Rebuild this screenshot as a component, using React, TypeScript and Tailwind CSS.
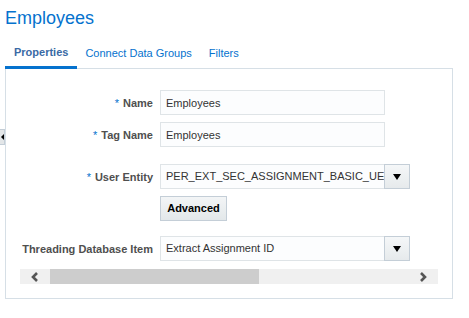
export default function App() {
  const font = { fontFamily: '"Liberation Sans", Arial, sans-serif' }

  return (
    <div className="relative w-[469px] h-[318px] bg-white overflow-hidden" style={font}>
      {/* collapse handle on the left edge */}
      <div className="absolute left-0 top-[129px] w-[5px] h-[16px] bg-[#e3e6e8] border border-l-0 border-[#c4ced7] flex items-center justify-center">
        <div className="w-0 h-0 border-y-[3px] border-y-transparent border-r-[3px] border-r-black" />
      </div>

      <div className="pl-[5px] w-[453px]">
        <h1 className="mt-[8px] text-[18px] leading-[21px] text-[#0572ce]">Employees</h1>

        {/* tabs */}
        <div className="mt-[16px] flex items-end border-b border-[#d6dfe6] text-[11px] leading-[14px]">
          <div className="px-[9px] pb-[7px] -mb-px border-b-[3px] border-[#0572ce] font-bold text-[#3a6aa5]">Properties</div>
          <div className="px-[8px] pb-[8px] text-[#0572ce]">Connect Data Groups</div>
          <div className="px-[9px] pb-[8px] text-[#0572ce]">Filters</div>
        </div>

        {/* panel */}
        <div className="border border-t-0 border-[#d6dfe6] pl-[14px] pt-[21px] pb-[14px] pr-[14px] text-[11px]">
          <div className="flex flex-col">
            <Row label="Name" required>
              <input readOnly value="Employees" className="w-[225px] h-[25px] px-[5px] border border-[#dfe4e7] bg-[#fcfdfe] text-[#333] outline-none" />
            </Row>
            <div className="mt-[7px]">
              <Row label="Tag Name" required>
                <input readOnly value="Employees" className="w-[225px] h-[25px] px-[5px] border border-[#dfe4e7] bg-[#fcfdfe] text-[#333] outline-none" />
              </Row>
            </div>
            <div className="mt-[17px]">
              <Row label="User Entity" required>
                <Select value="PER_EXT_SEC_ASSIGNMENT_BASIC_UE" />
              </Row>
            </div>
            <div className="mt-[7px] flex">
              <div className="w-[140px]" />
              <button className="h-[25px] w-[67px] border border-[#c4ced7] bg-gradient-to-b from-[#f3f5f6] to-[#e3e8ea] font-bold text-black">
                Advanced
              </button>
            </div>
            <div className="mt-[15px]">
              <Row label="Threading Database Item">
                <Select value="Extract Assignment ID" />
              </Row>
            </div>

            {/* horizontal scrollbar */}
            <div className="mt-[8px] h-[15px] w-[418px] flex items-center bg-[#f0f0f0]">
              <div className="w-[30px] h-full flex items-center justify-center">
                <svg width="8" height="10" viewBox="0 0 8 10">
                  <path d="M6 1 L2 5 L6 9" fill="none" stroke="#555" strokeWidth="2.6" />
                </svg>
              </div>
              <div className="w-[209px] h-full bg-[#cdcdcd]" />
              <div className="flex-1" />
              <div className="w-[30px] h-full flex items-center justify-center">
                <svg width="8" height="10" viewBox="0 0 8 10">
                  <path d="M2 1 L6 5 L2 9" fill="none" stroke="#555" strokeWidth="2.6" />
                </svg>
              </div>
            </div>
          </div>
        </div>
      </div>
    </div>
  )
}

function Row({ label, required, children }: { label: string; required?: boolean; children: React.ReactNode }) {
  return (
    <div className="flex items-center">
      <div className="w-[133px] mr-[7px] text-right font-bold text-[#4f4f4f] leading-[14px] whitespace-nowrap">
        {required && <span className="text-[#0572ce] font-normal mr-[4px]">*</span>}
        {label}
      </div>
      {children}
    </div>
  )
}

function Select({ value }: { value: string }) {
  return (
    <div className="flex h-[25px]">
      <div className="w-[225px] h-full px-[5px] flex items-center border border-[#dfe4e7] bg-[#fcfdfe] text-[#333] overflow-hidden whitespace-nowrap">
        {value}
      </div>
      <div className="w-[26px] h-full -ml-px border border-[#c4ced7] bg-gradient-to-b from-[#f5f7f8] to-[#e6eaec] flex items-center justify-center">
        <div className="w-0 h-0 border-x-[4px] border-x-transparent border-t-[6px] border-t-black" />
      </div>
    </div>
  )
}
